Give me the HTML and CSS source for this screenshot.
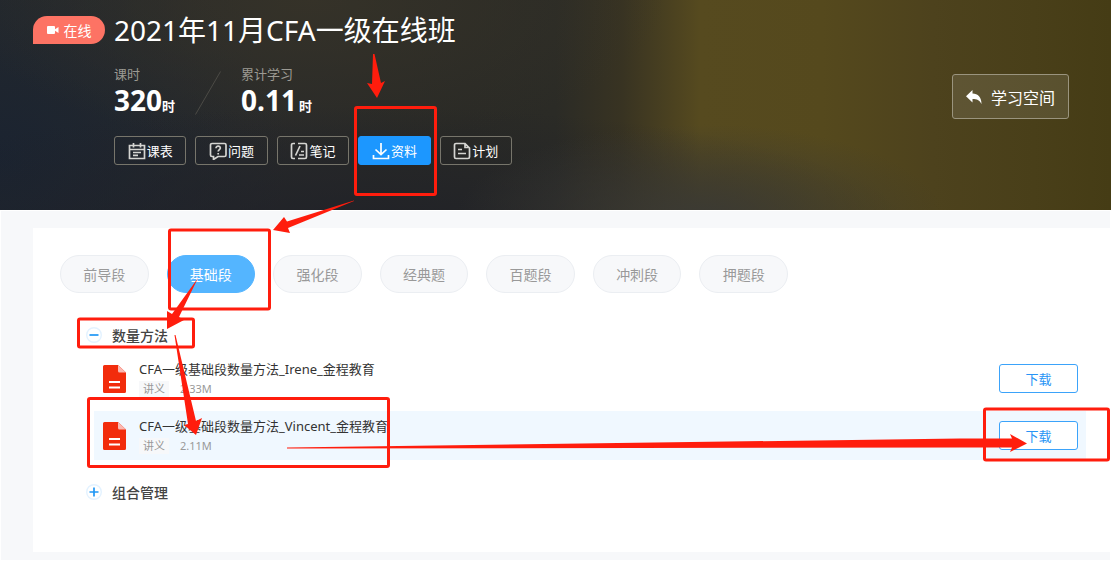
FILE: index.html
```
<!DOCTYPE html>
<html lang="zh-CN">
<head>
<meta charset="utf-8">
<title>2021年11月CFA一级在线班</title>
<link rel="stylesheet" href="styles.css">
</head>
<body>
<header class="hero">
  <span class="live-tag">
    <svg width="12" height="8" viewBox="0 0 12 8" aria-hidden="true"><rect width="8" height="8" rx="1" fill="#fff"/><path d="M8 3.2 11.5 1v6L8 4.8z" fill="#fff"/></svg>
    在线
  </span>
  <div class="course">
    <h1 class="course-title">2021年11月CFA一级在线班</h1>
    <div class="stats">
      <div class="stat"><span class="stat-label">课时</span><span class="stat-value">320<small>时</small></span></div>
      <svg class="slash" width="26" height="44" viewBox="0 0 26 44" aria-hidden="true"><path d="M0.5 43.5 25.5 0.5" stroke="#4c4b46" fill="none"/></svg>
      <div class="stat"><span class="stat-label">累计学习</span><span class="stat-value">0.11<small class="spaced">时</small></span></div>
    </div>
    <nav class="actions">
      <button class="action" type="button">
        <svg class="action-icon" viewBox="0 0 18 18" aria-hidden="true"><path d="M1.500 3.500h15v13h-15zM1.500 7.500h15M5.500 1v4.500M12.500 1v4.500M5 10.500h8M5 13.300h5"/></svg>课表</button>
      <button class="action" type="button">
        <svg class="action-icon" viewBox="0 0 18 18" aria-hidden="true"><path d="M3 1.500h12.500a1.500 1.500 0 0 1 1.500 1.500v10a1.500 1.500 0 0 1-1.500 1.500H9L4.500 17.500v-3H3A1.500 1.500 0 0 1 1.500 13V3A1.500 1.500 0 0 1 3 1.500zM7 6.200c0-3 4.500-2.600 4.300 0C11.200 7.600 9.200 7.600 9.200 9.500M9.200 11v1.500"/></svg>问题</button>
      <button class="action" type="button">
        <svg class="action-icon" viewBox="0 0 18 18" aria-hidden="true"><path d="M5 1.500H3A1.500 1.500 0 0 0 1.500 3v12A1.500 1.500 0 0 0 3 16.500h2M8 1.500h7A1.500 1.500 0 0 1 16.500 3v12a1.500 1.500 0 0 1-1.500 1.500H8M10 4 5.500 13.500M11 9.500h3M9 13h5"/></svg>笔记</button>
      <button class="action action-active" type="button">
        <svg class="action-icon" viewBox="0 0 18 18" aria-hidden="true"><path d="M9 1v11.500M3.500 7.500 9 12.700l5.500-5.200M1.500 13v3.500h15V13"/></svg>资料</button>
      <button class="action" type="button">
        <svg class="action-icon" viewBox="0 0 18 18" aria-hidden="true"><path d="M12 1.500H3A1.500 1.500 0 0 0 1.500 3v12A1.500 1.500 0 0 0 3 16.500h12a1.500 1.500 0 0 0 1.500-1.500V6zM12 1.500V5.500h4.500M5 7.500h4M5 11.500h8"/></svg>计划</button>
    </nav>
  </div>
  <button class="space-button" type="button">
    <svg width="16" height="14" viewBox="0 0 16 14" aria-hidden="true"><path d="M0 6.200 6.500 0v3.500C12 3.600 15.500 7 15.500 14 13.500 10.200 11 9 6.500 9v3.500z" fill="#fff"/></svg>
    学习空间
  </button>
</header>
<main class="page">
  <section class="card">
    <nav class="tabs">
      <button class="tab" type="button">前导段</button>
      <button class="tab tab-active" type="button">基础段</button>
      <button class="tab" type="button">强化段</button>
      <button class="tab" type="button">经典题</button>
      <button class="tab" type="button">百题段</button>
      <button class="tab" type="button">冲刺段</button>
      <button class="tab" type="button">押题段</button>
    </nav>
    <button class="group" type="button" aria-expanded="true">
      <svg width="16" height="16" viewBox="0 0 16 16" aria-hidden="true"><circle cx="8" cy="8" r="7.300" fill="#fff" stroke="#e3f2ff" stroke-width="1.400"/><path d="M3.500 8h9" stroke="#1f97f5" stroke-width="1.700"/></svg>
      数量方法
    </button>
    <ul class="files">
      <li class="file">
        <svg class="file-icon" width="23" height="28" viewBox="0 0 23 28" aria-hidden="true"><path d="M1.500 0H15l8 7.500v19a1.500 1.500 0 0 1-1.500 1.500h-20A1.500 1.500 0 0 1 0 26.500v-25A1.500 1.500 0 0 1 1.500 0z" fill="#f22c0c"/><path d="M15 0v6a1.500 1.500 0 0 0 1.500 1.500H23z" fill="#fbb9b2"/><path d="M6 17h11M6 22.500h11" stroke="#fff" stroke-width="2"/></svg>
        <div class="file-info">
          <span class="file-name">CFA一级基础段数量方法_Irene_金程教育</span>
          <span class="file-meta"><span class="kind">讲义</span>2.33M</span>
        </div>
        <button class="download" type="button">下载</button>
      </li>
      <li class="file file-hover">
        <svg class="file-icon" width="23" height="28" viewBox="0 0 23 28" aria-hidden="true"><path d="M1.500 0H15l8 7.500v19a1.500 1.500 0 0 1-1.500 1.500h-20A1.500 1.500 0 0 1 0 26.500v-25A1.500 1.500 0 0 1 1.500 0z" fill="#f22c0c"/><path d="M15 0v6a1.500 1.500 0 0 0 1.500 1.500H23z" fill="#fbb9b2"/><path d="M6 17h11M6 22.500h11" stroke="#fff" stroke-width="2"/></svg>
        <div class="file-info">
          <span class="file-name">CFA一级基础段数量方法_Vincent_金程教育</span>
          <span class="file-meta"><span class="kind">讲义</span>2.11M</span>
        </div>
        <button class="download" type="button">下载</button>
      </li>
    </ul>
    <button class="group" type="button" aria-expanded="false">
      <svg width="16" height="16" viewBox="0 0 16 16" aria-hidden="true"><circle cx="8" cy="8" r="7.300" fill="#fff" stroke="#e3f2ff" stroke-width="1.400"/><path d="M3.500 8h9M8 3.500v9" stroke="#1f97f5" stroke-width="1.700"/></svg>
      组合管理
    </button>
  </section>
</main>
<svg class="marks" width="1111" height="562" viewBox="0 0 1111 562" aria-hidden="true">
  <g fill="none" stroke="#ff1d0d" stroke-width="3">
    <rect x="355.500" y="107.500" width="80" height="87" rx="1.500"/>
    <rect x="169.500" y="230" width="100" height="79" rx="1.500"/>
    <rect x="78.500" y="319" width="115" height="28" rx="1.500"/>
    <rect x="88.500" y="398.500" width="300" height="68" rx="1.500"/>
    <rect x="984.500" y="409" width="124" height="51" rx="1.500"/>
  </g>
  <g fill="#ff1d0d">
    <path d="M373 54h1.500L381 83l4-2-8 17-10-15 5 1z"/>
    <path d="M354 200.500 287 221.500 284 217 273 230l17 3-2-5 66-27z"/>
    <path d="M198 278 172 314l-5-3v18l17-9-5-3z"/>
    <path d="M174.500 335 188 424l-4 1 12 10 6-17-6 3-20.500-86z"/>
    <path d="M287 447.500 960 438.500h52L1010 434l17 9.500-17 8.500 2-4.500h-52L287 448.500z"/>
  </g>
</svg>
</body>
</html>
```
FILE: styles.css
```
* { box-sizing: border-box; }
body {
  position: relative;
  margin: 0;
  background: #fff;
  color: #333;
  font-family: "Noto Sans", "Noto Sans CJK SC", sans-serif;
  font-size: 13px;
}
button {
  margin: 0;
  padding: 0;
  font: inherit;
  cursor: pointer;
}
.hero {
  display: flex;
  align-items: flex-start;
  gap: 9px;
  min-height: 210px;
  padding: 12px 42px 45px 33px;
  color: #fff;
  background:
    radial-gradient(ellipse 22% 45% at 63% 104%, #3b3a34 0%, rgba(60, 59, 52, 0) 100%),
    radial-gradient(ellipse 50% 60% at 32% 110%, rgba(30, 32, 40, 0.800) 0%, rgba(30, 32, 40, 0) 100%),
    radial-gradient(ellipse 32% 70% at 28% 0%, rgba(56, 52, 40, 0.800) 0%, rgba(56, 52, 40, 0) 100%),
    radial-gradient(ellipse 26% 110% at 0% 75%, rgba(26, 35, 49, 0.900) 0%, rgba(26, 35, 49, 0) 100%),
    linear-gradient(90deg, #25292c 0%, #292a2a 22%, #2a2a26 42%, #2b2b26 50%, #383322 56%, #564a1f 63%, #55491d 74%, #4d421d 84%, #493f19 93%, #453c15 100%);
}
.live-tag {
  display: flex;
  align-items: center;
  justify-content: center;
  gap: 5px;
  width: 72px;
  height: 28px;
  margin-top: 4px;
  border-radius: 14px 14px 14px 0;
  background: #fd7364;
  font-size: 14px;
}
.course { flex: 1; }
.course-title {
  margin: 0;
  font-size: 28px;
  line-height: 36px;
  font-weight: 400;
}
.stats {
  display: flex;
  align-items: center;
  gap: 20px;
  margin-top: 16px;
}
.stat {
  display: flex;
  flex-direction: column;
}
.stat-label {
  color: #9c9a93;
  line-height: 20px;
}
.stat-value {
  font-size: 28px;
  line-height: 32px;
  font-weight: 700;
}
.stat-value small { font-size: 13px; }
.stat-value .spaced { margin-left: 2px; }
.actions {
  display: grid;
  grid-template-columns: repeat(5, 1fr);
  gap: 9px;
  max-width: 398px;
  margin-top: 14px;
}
.action {
  display: flex;
  align-items: center;
  justify-content: center;
  gap: 1px;
  height: 29px;
  border: 1px solid #77756b;
  border-radius: 3px;
  background: transparent;
  color: #fff;
}
.action-active {
  border-color: #1c97ff;
  background: #1c97ff;
}
.action-icon {
  width: 18px;
  height: 18px;
  fill: none;
  stroke: #d5d5d2;
  stroke-width: 1.700;
}
.action-active .action-icon { stroke: #fff; }
.space-button {
  display: flex;
  align-items: center;
  justify-content: center;
  gap: 9px;
  width: 117px;
  height: 45px;
  margin-top: 62px;
  border: 1px solid #9a947e;
  border-radius: 3px;
  background: rgba(255, 255, 255, 0.100);
  color: #fff;
  font-size: 16px;
}
.page {
  margin: 1px 1px 2px;
  padding: 17px 0 8px 32px;
  background: #f7f8fa;
}
.card {
  padding: 27px 24px 50px 27px;
  background: #fff;
}
.tabs {
  display: grid;
  grid-template-columns: repeat(7, 1fr);
  gap: 18px;
  max-width: 728px;
}
.tab {
  height: 38px;
  border: 1px solid #ebeef2;
  border-radius: 19px;
  background: #f7f8fa;
  color: #999;
  font-size: 14px;
}
.tab-active {
  border-color: #54b5ff;
  background: #54b5ff;
  color: #fff;
}
.group {
  display: flex;
  align-items: center;
  gap: 10px;
  height: 20px;
  margin: 32px 0 0 26px;
  border: 0;
  background: none;
  color: #444;
  font-size: 14px;
  font-weight: 500;
}
.files {
  display: grid;
  gap: 8px;
  margin: 9px 0 -10px 34px;
  padding: 0;
  list-style: none;
}
.file {
  display: flex;
  align-items: center;
  gap: 13px;
  height: 49px;
  padding: 0 8px 0 9px;
}
.file-hover { background: #f0f8ff; }
.file-info {
  display: flex;
  flex: 1;
  flex-direction: column;
  gap: 2px;
  padding-bottom: 2px;
}
.file-name { line-height: 20px; }
.file-meta {
  display: flex;
  align-items: center;
  gap: 11px;
  color: #999;
  font-size: 11px;
  line-height: 16px;
}
.kind {
  padding: 0 4px;
  background: #f7f8fa;
}
.download {
  width: 79px;
  height: 29px;
  border: 1px solid #3ba3fa;
  border-radius: 3px;
  background: #fff;
  color: #2894f5;
}
.marks {
  position: absolute;
  top: 0;
  left: 0;
  pointer-events: none;
}
```
